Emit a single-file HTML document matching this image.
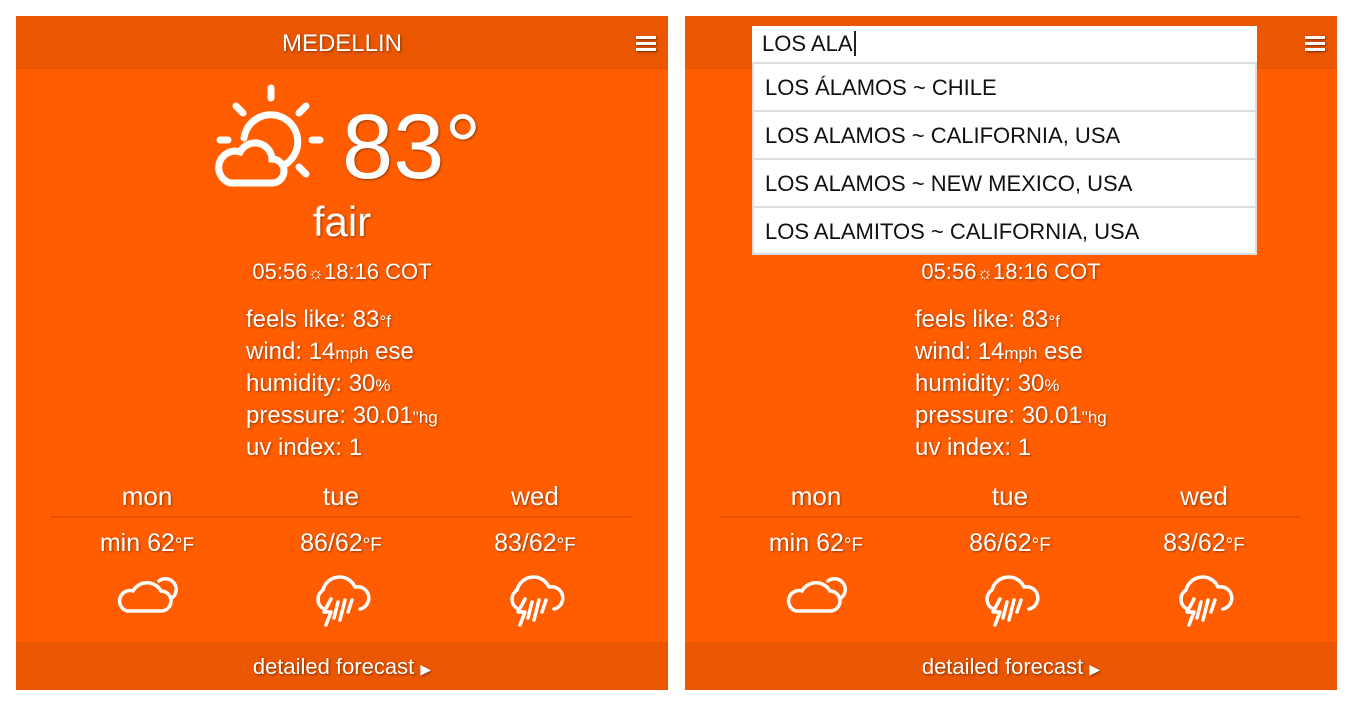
<!DOCTYPE html>
<html><head><meta charset="utf-8"><style>
*{margin:0;padding:0;box-sizing:border-box}
body{width:1353px;height:705px;background:#fff;position:relative;overflow:hidden;font-family:"Liberation Sans","DejaVu Sans",sans-serif;color:#fff}
.p{position:absolute;top:16px;width:652px;height:674px;background:#ff5d00}
.hd{position:absolute;left:0;top:0;width:652px;height:53px;background:#eb5600;border-bottom:1px solid #e65200}
.ft{position:absolute;left:0;bottom:0;width:652px;height:48px;background:#eb5600;text-align:center;font-size:22px;line-height:50px;text-shadow:1px 1px 2px rgba(0,0,0,.45)}
.t{position:absolute;text-shadow:1px 1px 2px rgba(0,0,0,.4);white-space:nowrap}
.c{text-align:center}
.menu{position:absolute;right:12px;top:20px;width:20px}
.menu i{display:block;height:3px;background:#fff;margin-bottom:3px;box-shadow:1px 1px 2px rgba(0,0,0,.5)}
.div{position:absolute;left:34px;top:500px;width:582px;height:2px;background:#e85300}
small{font-size:17px}
.det div{height:32px;line-height:32px}
.dd{position:absolute;left:752px;top:26px;width:505px;background:#fff;color:#111;font-size:22px}
.dd .in{height:36px;line-height:36px;padding-left:10px}
.dd .it{height:48px;line-height:48px;padding-left:11px;border:2px solid #ddd;border-bottom:none}
.dd .it:last-child{border-bottom:2px solid #ddd;height:49px}
.tmp{font-size:25px}
.tmp small{font-size:19px}
</style></head><body>

<!-- LEFT PANEL -->
<div class="p" style="left:16px">
 <div class="hd"></div>
 <div class="t c" style="left:0;width:652px;top:14px;font-size:24px">MEDELLIN</div>
 <div class="menu"><i></i><i></i><i></i></div>
 <svg style="position:absolute;left:198px;top:68px" width="116" height="106" viewBox="0 0 116 106" fill="none" stroke="#fff" stroke-width="7" stroke-linecap="round">
  <path d="M30 54 A27 27 0 1 1 72 80"/>
  <path d="M57 4 V14 M6 56 H14 M98 56 H106 M22 22 L29 29 M92 22 L85 29 M92 90 L85 83"/>
  <path d="M16 99 H58 A12 12 0 0 0 58 75 A17 17 0 0 0 26 68 A15 15 0 0 0 16 99 Z"/>
 </svg>
 <div class="t" style="left:326px;top:76px;font-size:92px;line-height:110px">83°</div>
 <div class="t c" style="left:0;width:652px;top:182px;font-size:42px">fair</div>
 <div class="t c" style="left:0;width:652px;top:243px;font-size:22px">05:56<span style="font-size:18px">☼</span>18:16 COT</div>
 <div class="t det" style="left:230px;top:288px;font-size:24px">
  <div>feels like: 83<small>°f</small></div><div>wind: 14<small>mph</small> ese</div><div>humidity: 30<small>%</small></div><div>pressure: 30.01<small>"hg</small></div><div>uv index: 1</div></div>
 <div class="t c" style="left:34px;width:194px;top:465px;font-size:26px">mon</div>
 <div class="t c" style="left:228px;width:194px;top:465px;font-size:26px">tue</div>
 <div class="t c" style="left:422px;width:194px;top:465px;font-size:26px">wed</div>
 <div class="div"></div>
 <div class="t c tmp" style="left:34px;width:194px;top:513px">min 62<small>°F</small></div>
 <div class="t c tmp" style="left:228px;width:194px;top:513px">86/62<small>°F</small></div>
 <div class="t c tmp" style="left:422px;width:194px;top:513px">83/62<small>°F</small></div>
 <svg style="position:absolute;left:101px;top:553px" width="62" height="48" viewBox="0 0 62 48" fill="none" stroke="#fff" stroke-width="3.5" stroke-linecap="round">
  <path d="M10 42 H44 A10 10 0 0 0 44 22 A16 16 0 0 0 16 22 A10 10 0 0 0 10 42 Z"/>
  <path d="M42 12 A9 9 0 0 1 55 29"/>
 </svg>
 <svg style="position:absolute;left:294px;top:554px" width="62" height="60" viewBox="0 0 62 60" fill="none" stroke="#fff" stroke-width="3.5" stroke-linecap="round" stroke-linejoin="round">
  <path d="M14 39 A11 11 0 0 1 13 20 A17 17 0 0 1 45 17 A11 11 0 0 1 50 39"/>
  <path d="M21 29 L14 42 H21 L16 55" /><path d="M28 32 L24 48 M35 30 L30 50 M42 30 L38 42"/>
 </svg>
 <svg style="position:absolute;left:488px;top:554px" width="62" height="60" viewBox="0 0 62 60" fill="none" stroke="#fff" stroke-width="3.5" stroke-linecap="round" stroke-linejoin="round">
  <path d="M14 39 A11 11 0 0 1 13 20 A17 17 0 0 1 45 17 A11 11 0 0 1 50 39"/>
  <path d="M21 29 L14 42 H21 L16 55" /><path d="M28 32 L24 48 M35 30 L30 50 M42 30 L38 42"/>
 </svg>
 <div class="ft">detailed forecast <span style="font-size:14px">▶</span></div>
</div>

<!-- RIGHT PANEL -->
<div class="p" style="left:685px">
 <div class="hd"></div>
 <div class="menu"><i></i><i></i><i></i></div>
 <div class="t c" style="left:0;width:652px;top:243px;font-size:22px">05:56<span style="font-size:18px">☼</span>18:16 COT</div>
 <div class="t det" style="left:230px;top:288px;font-size:24px">
  <div>feels like: 83<small>°f</small></div><div>wind: 14<small>mph</small> ese</div><div>humidity: 30<small>%</small></div><div>pressure: 30.01<small>"hg</small></div><div>uv index: 1</div></div>
 <div class="t c" style="left:34px;width:194px;top:465px;font-size:26px">mon</div>
 <div class="t c" style="left:228px;width:194px;top:465px;font-size:26px">tue</div>
 <div class="t c" style="left:422px;width:194px;top:465px;font-size:26px">wed</div>
 <div class="div"></div>
 <div class="t c tmp" style="left:34px;width:194px;top:513px">min 62<small>°F</small></div>
 <div class="t c tmp" style="left:228px;width:194px;top:513px">86/62<small>°F</small></div>
 <div class="t c tmp" style="left:422px;width:194px;top:513px">83/62<small>°F</small></div>
 <svg style="position:absolute;left:101px;top:553px" width="62" height="48" viewBox="0 0 62 48" fill="none" stroke="#fff" stroke-width="3.5" stroke-linecap="round">
  <path d="M10 42 H44 A10 10 0 0 0 44 22 A16 16 0 0 0 16 22 A10 10 0 0 0 10 42 Z"/>
  <path d="M42 12 A9 9 0 0 1 55 29"/>
 </svg>
 <svg style="position:absolute;left:294px;top:554px" width="62" height="60" viewBox="0 0 62 60" fill="none" stroke="#fff" stroke-width="3.5" stroke-linecap="round" stroke-linejoin="round">
  <path d="M14 39 A11 11 0 0 1 13 20 A17 17 0 0 1 45 17 A11 11 0 0 1 50 39"/>
  <path d="M21 29 L14 42 H21 L16 55" /><path d="M28 32 L24 48 M35 30 L30 50 M42 30 L38 42"/>
 </svg>
 <svg style="position:absolute;left:488px;top:554px" width="62" height="60" viewBox="0 0 62 60" fill="none" stroke="#fff" stroke-width="3.5" stroke-linecap="round" stroke-linejoin="round">
  <path d="M14 39 A11 11 0 0 1 13 20 A17 17 0 0 1 45 17 A11 11 0 0 1 50 39"/>
  <path d="M21 29 L14 42 H21 L16 55" /><path d="M28 32 L24 48 M35 30 L30 50 M42 30 L38 42"/>
 </svg>
 <div class="ft">detailed forecast <span style="font-size:14px">▶</span></div>
</div>

<div class="dd">
 <div class="in">LOS ALA<span style="border-left:2px solid #222;margin-left:1px"></span></div>
 <div class="it">LOS ÁLAMOS ~ CHILE</div>
 <div class="it">LOS ALAMOS ~ CALIFORNIA, USA</div>
 <div class="it">LOS ALAMOS ~ NEW MEXICO, USA</div>
 <div class="it">LOS ALAMITOS ~ CALIFORNIA, USA</div>
</div>
</body></html>
